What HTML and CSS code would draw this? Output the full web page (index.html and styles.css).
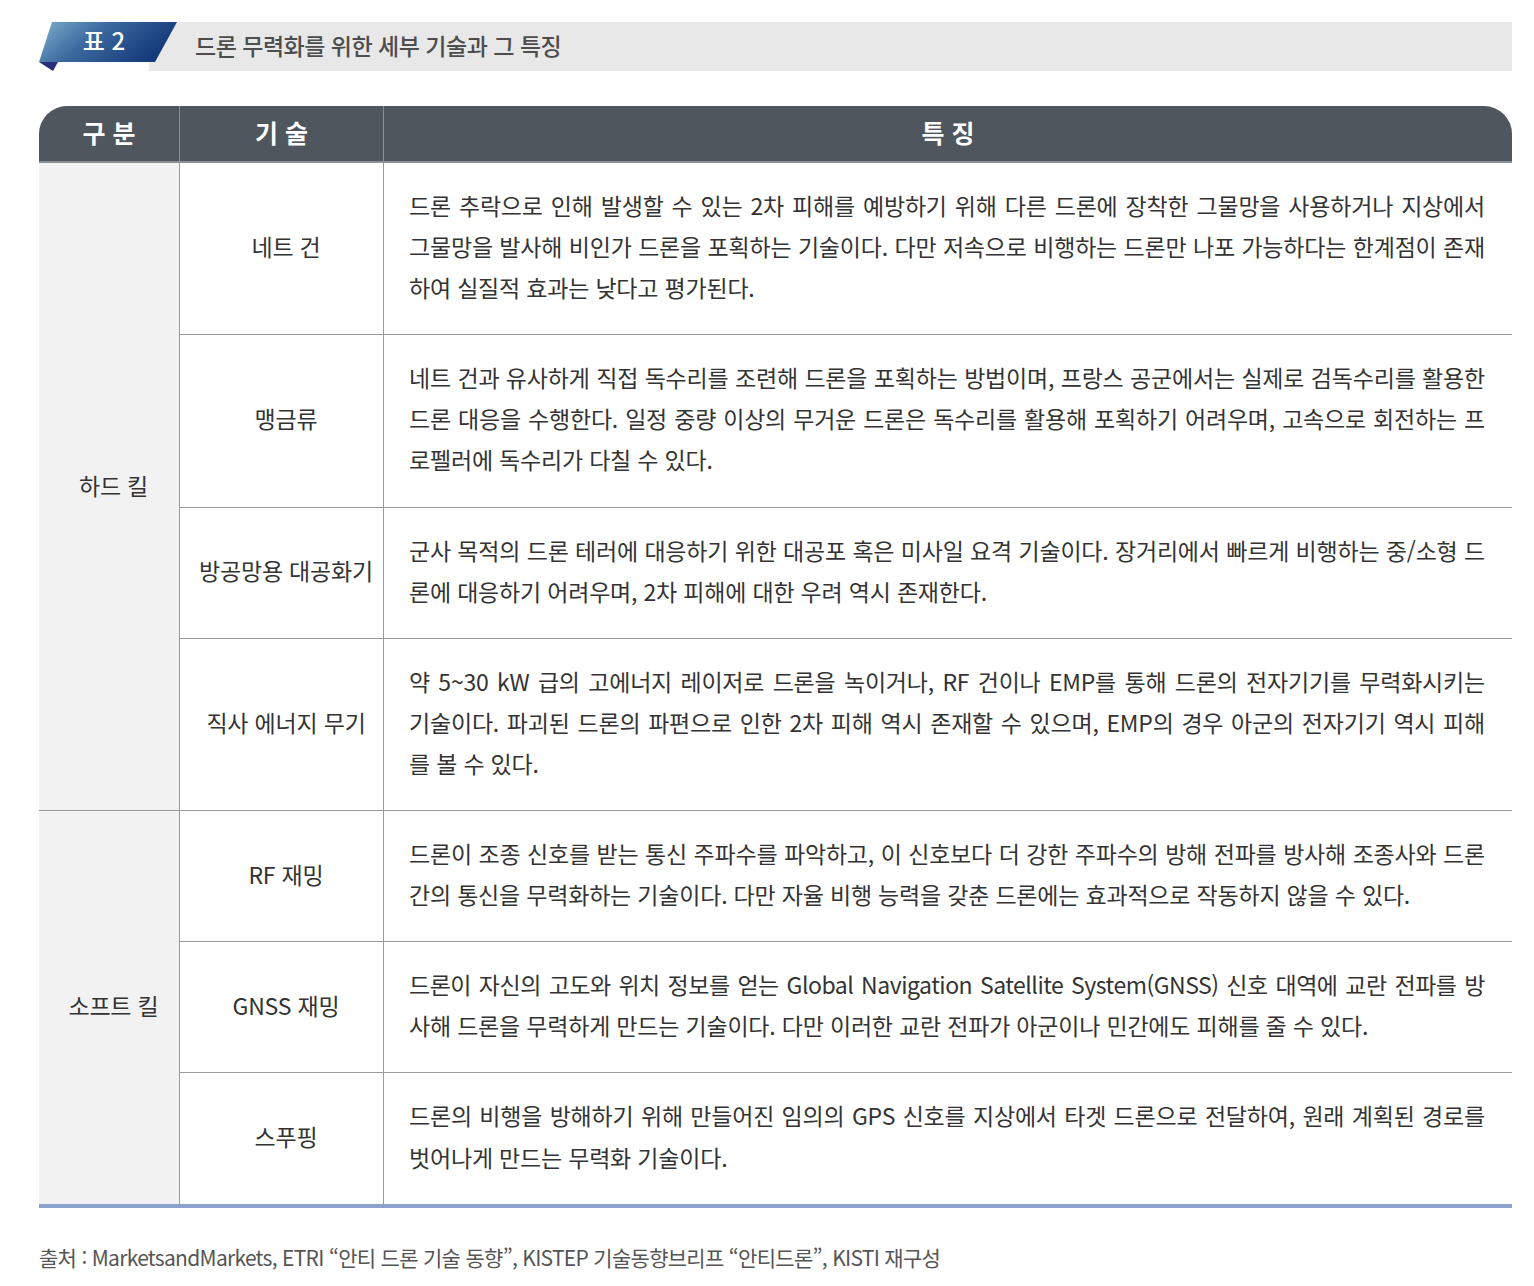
FILE: index.html
```html
<!DOCTYPE html>
<html lang="ko">
<head>
<meta charset="utf-8">
<title>표 2 드론 무력화를 위한 세부 기술과 그 특징</title>
<link rel="stylesheet" href="styles.css">
</head>
<body>
<div class="page">
  <div class="title">
    <div class="badge">
      <svg class="badge-bg" width="140" height="49" viewBox="0 0 140 49">
        <defs>
          <linearGradient id="bg" x1="0" y1="0" x2="1" y2="0.35">
            <stop offset="0" stop-color="#7eb0cc"/>
            <stop offset="0.45" stop-color="#3c6aa0"/>
            <stop offset="1" stop-color="#153a7a"/>
          </linearGradient>
        </defs>
        <polygon points="0,40 19,40 14,49" fill="#2a2f7c"/>
        <polygon points="13,0 138,0 116,40 0,40" fill="url(#bg)"/>
      </svg>
      <span class="badge-text">표 2</span>
    </div>
    <div class="title-text">드론 무력화를 위한 세부 기술과 그 특징</div>
  </div>

  <table class="tbl">
    <thead>
      <tr>
        <th class="c1">구 분</th>
        <th class="c2">기 술</th>
        <th class="c3">특 징</th>
      </tr>
    </thead>
    <tbody>
      <tr>
        <td class="cat" rowspan="4">하드 킬</td>
        <td class="tech">네트 건</td>
        <td class="desc">
          <span class="ln">드론 추락으로 인해 발생할 수 있는 2차 피해를 예방하기 위해 다른 드론에 장착한 그물망을 사용하거나 지상에서</span>
          <span class="ln">그물망을 발사해 비인가 드론을 포획하는 기술이다. 다만 저속으로 비행하는 드론만 나포 가능하다는 한계점이 존재</span>
          <span class="ln">하여 실질적 효과는 낮다고 평가된다.</span>
        </td>
      </tr>
      <tr>
        <td class="tech">맹금류</td>
        <td class="desc">
          <span class="ln">네트 건과 유사하게 직접 독수리를 조련해 드론을 포획하는 방법이며, 프랑스 공군에서는 실제로 검독수리를 활용한</span>
          <span class="ln">드론 대응을 수행한다. 일정 중량 이상의 무거운 드론은 독수리를 활용해 포획하기 어려우며, 고속으로 회전하는 프</span>
          <span class="ln">로펠러에 독수리가 다칠 수 있다.</span>
        </td>
      </tr>
      <tr>
        <td class="tech">방공망용 대공화기</td>
        <td class="desc">
          <span class="ln">군사 목적의 드론 테러에 대응하기 위한 대공포 혹은 미사일 요격 기술이다. 장거리에서 빠르게 비행하는 중/소형 드</span>
          <span class="ln">론에 대응하기 어려우며, 2차 피해에 대한 우려 역시 존재한다.</span>
        </td>
      </tr>
      <tr>
        <td class="tech">직사 에너지 무기</td>
        <td class="desc">
          <span class="ln">약 5~30 kW 급의 고에너지 레이저로 드론을 녹이거나, RF 건이나 EMP를 통해 드론의 전자기기를 무력화시키는</span>
          <span class="ln">기술이다. 파괴된 드론의 파편으로 인한 2차 피해 역시 존재할 수 있으며, EMP의 경우 아군의 전자기기 역시 피해</span>
          <span class="ln">를 볼 수 있다.</span>
        </td>
      </tr>
      <tr>
        <td class="cat last" rowspan="3">소프트 킬</td>
        <td class="tech">RF 재밍</td>
        <td class="desc">
          <span class="ln">드론이 조종 신호를 받는 통신 주파수를 파악하고, 이 신호보다 더 강한 주파수의 방해 전파를 방사해 조종사와 드론</span>
          <span class="ln">간의 통신을 무력화하는 기술이다. 다만 자율 비행 능력을 갖춘 드론에는 효과적으로 작동하지 않을 수 있다.</span>
        </td>
      </tr>
      <tr>
        <td class="tech">GNSS 재밍</td>
        <td class="desc">
          <span class="ln tight">드론이 자신의 고도와 위치 정보를 얻는 Global Navigation Satellite System(GNSS) 신호 대역에 교란 전파를 방</span>
          <span class="ln">사해 드론을 무력하게 만드는 기술이다. 다만 이러한 교란 전파가 아군이나 민간에도 피해를 줄 수 있다.</span>
        </td>
      </tr>
      <tr class="last-row">
        <td class="tech">스푸핑</td>
        <td class="desc">
          <span class="ln">드론의 비행을 방해하기 위해 만들어진 임의의 GPS 신호를 지상에서 타겟 드론으로 전달하여, 원래 계획된 경로를</span>
          <span class="ln">벗어나게 만드는 무력화 기술이다.</span>
        </td>
      </tr>
    </tbody>
  </table>

  <p class="source">출처 : MarketsandMarkets, ETRI “안티 드론 기술 동향”, KISTEP 기술동향브리프 “안티드론”, KISTI 재구성</p>
</div>
</body>
</html>
```

FILE: styles.css
```css
* { box-sizing: border-box; }

html, body {
  margin: 0;
  padding: 0;
  background: #ffffff;
}

body {
  font-family: "Noto Sans CJK KR", "Noto Sans", sans-serif;
  color: #333333;
}

.page {
  padding: 22px 22px 0 39px;
}

/* ---------- title ---------- */
.title {
  display: flex;
  align-items: stretch;
  height: 49px;
  width: 1473px;
}

.badge {
  position: relative;
  z-index: 1;
  flex: none;
  width: 140px;
  height: 49px;
}

.badge-bg {
  position: absolute;
  left: 0;
  top: 0;
  display: block;
}

.badge-text {
  position: relative;
  display: flex;
  align-items: center;
  justify-content: center;
  width: 134px;
  height: 40px;
  padding: 0 4px 5px 0;
  color: #ffffff;
  font-size: 24px;
  font-weight: 500;
}

.title-text {
  flex: 1;
  margin-left: -30px;
  padding: 0 0 3px 46px;
  background: #e8e8e8;
  display: flex;
  align-items: center;
  font-size: 23px;
  font-weight: 500;
  letter-spacing: -0.5px;
  color: #4d4d4d;
}

/* ---------- table ---------- */
.tbl {
  margin-top: 35px;
  width: 1473px;
  border-collapse: separate;
  border-spacing: 0;
  table-layout: fixed;
}

.tbl th {
  height: 57px;
  padding: 0 0 4px;
  background: #50565d;
  color: #ffffff;
  font-size: 25px;
  font-weight: 700;
  text-align: center;
  border-bottom: 2px solid #8b9095;
  border-right: 1px solid #8b9095;
}

.tbl th.c1 {
  width: 141px;
  border-top-left-radius: 28px;
}

.tbl th.c2 {
  width: 204px;
}

.tbl th.c3 {
  border-right: none;
  border-top-right-radius: 28px;
}

.tbl td {
  border-bottom: 1px solid #9a9a9a;
  border-right: 1px solid #9a9a9a;
  vertical-align: middle;
  font-size: 23px;
  letter-spacing: -0.2px;
  color: #333333;
}

.tbl td.cat {
  background: #f2f2f2;
  text-align: center;
  padding: 0 0 4px 9px;
}

.tbl td.tech {
  text-align: center;
  padding: 0 0 5px 9px;
}

.tbl td.desc {
  border-right: none;
  padding: 22px 27px 26px 25px;
  line-height: 41.1px;
}

.tbl tr.last-row td,
.tbl td.cat.last {
  border-bottom: 4px solid #8aa2cc;
}

.ln {
  display: block;
  white-space: nowrap;
  text-align: justify;
  text-align-last: justify;
}

.ln.tight {
  letter-spacing: -0.5px;
}

.ln:last-child {
  text-align-last: left;
}

/* ---------- source ---------- */
.source {
  margin: 34px 0 0;
  font-size: 21px;
  line-height: 30px;
  letter-spacing: -0.7px;
  color: #555555;
}
```
